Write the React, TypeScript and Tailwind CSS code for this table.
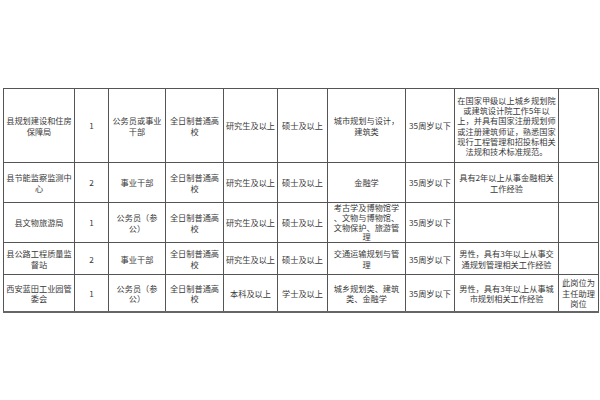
import React from "react";

type Cell = string[];

const rows: { h: string; cells: Cell[] }[] = [
  {
    h: "h-[74px]",
    cells: [
      ["县规划建设和住房", "保障局"],
      ["1"],
      ["公务员或事业", "干部"],
      ["全日制普通高", "校"],
      ["研究生及以上"],
      ["硕士及以上"],
      ["城市规划与设计，", "建筑类"],
      ["35周岁以下"],
      [
        "在国家甲级以上城乡规划院",
        "或建筑设计院工作5年以",
        "上，并具有国家注册规划师",
        "或注册建筑师证，熟悉国家",
        "现行工程管理和招投标相关",
        "法规和技术标准规范。",
      ],
      [],
    ],
  },
  {
    h: "h-[40px]",
    cells: [
      ["县节能监察监测中", "心"],
      ["2"],
      ["事业干部"],
      ["全日制普通高", "校"],
      ["研究生及以上"],
      ["硕士及以上"],
      ["金融学"],
      ["35周岁以下"],
      ["具有2年以上从事金融相关", "工作经验"],
      [],
    ],
  },
  {
    h: "h-[40px]",
    cells: [
      ["县文物旅游局"],
      ["1"],
      ["公务员（参", "公）"],
      ["全日制普通高", "校"],
      ["研究生及以上"],
      ["硕士及以上"],
      ["考古学及博物馆学", "、文物与博物馆、", "文物保护、旅游管", "理"],
      ["35周岁以下"],
      [],
      [],
    ],
  },
  {
    h: "h-[32px]",
    cells: [
      ["县公路工程质量监", "督站"],
      ["2"],
      ["事业干部"],
      ["全日制普通高", "校"],
      ["研究生及以上"],
      ["硕士及以上"],
      ["交通运输规划与管", "理"],
      ["35周岁以下"],
      ["男性，具有3年以上从事交", "通规划管理相关工作经验"],
      [],
    ],
  },
  {
    h: "h-[37px]",
    cells: [
      ["西安蓝田工业园管", "委会"],
      ["1"],
      ["公务员（参", "公）"],
      ["全日制普通高", "校"],
      ["本科及以上"],
      ["学士及以上"],
      ["城乡规划类、建筑", "类、金融学"],
      ["35周岁以下"],
      ["男性，具有3年以上从事城", "市规划相关工作经验"],
      ["此岗位为", "主任助理", "岗位"],
    ],
  },
];

export default function App() {
  return (
    <div
      className="w-[600px] h-[400px] bg-white overflow-hidden pt-[88px] pl-[3px] text-[#3a3a3a]"
      style={{ fontFamily: '"Noto Sans CJK SC", "Noto Sans", sans-serif' }}
    >
      <table className="table-fixed border-collapse w-[595px] text-[8.2px] leading-[10.3px]">
        <colgroup>
          <col className="w-[71px]" />
          <col className="w-[34px]" />
          <col className="w-[57px]" />
          <col className="w-[58px]" />
          <col className="w-[54px]" />
          <col className="w-[50px]" />
          <col className="w-[78px]" />
          <col className="w-[49px]" />
          <col className="w-[104px]" />
          <col className="w-[40px]" />
        </colgroup>
        <tbody>
          {rows.map((r, i) => (
            <tr key={i} className={r.h}>
              {r.cells.map((c, j) => (
                <td
                  key={j}
                  className={`border border-[#555] p-0 text-center align-middle whitespace-nowrap overflow-hidden ${
                    i === rows.length - 1 ? "border-b-2 border-b-[#666]" : ""
                  } ${j === 6 && i === 2 ? "leading-[9.8px]" : ""}`}
                >
                  {c.map((line, k) => (
                    <div key={k}>{line}</div>
                  ))}
                </td>
              ))}
            </tr>
          ))}
        </tbody>
      </table>
    </div>
  );
}
